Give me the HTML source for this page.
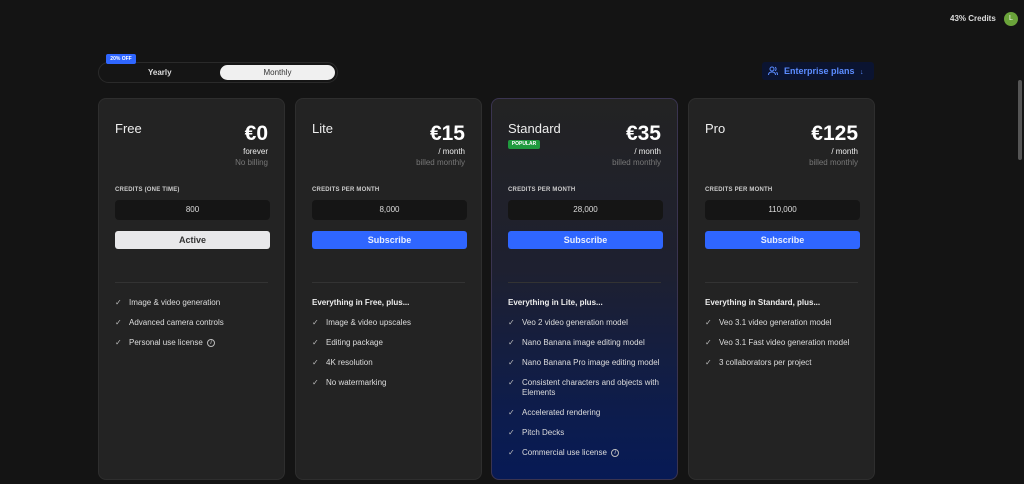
<!DOCTYPE html>
<html><head><meta charset="utf-8"><style>
*{margin:0;padding:0;box-sizing:border-box}
body{width:1024px;height:484px;background:#141414;font-family:"Liberation Sans",sans-serif;color:#fff;position:relative;overflow:hidden}
.a{position:absolute}
.card{position:absolute;top:98px;width:187px;height:382px;background:#232323;border:1px solid #2e2e2e;border-radius:8px}
.std{background:linear-gradient(180deg,#232323 0%,#1e2030 45%,#0c1c4e 85%,#071a55 100%);border-color:#3a3450}
.t{position:absolute;left:16px;top:22px;font-size:13px;color:#eee}
.p{position:absolute;right:16px;top:23px;font-size:21px;font-weight:bold}
.m{position:absolute;right:16px;top:48px;font-size:8px;color:#eee}
.b{position:absolute;right:16px;top:59px;font-size:8px;color:#777}
.cl{position:absolute;left:16px;top:88px;font-size:6px;font-weight:bold;color:#ccc;letter-spacing:.2px}
.box{position:absolute;left:16px;top:101px;width:155px;height:20px;background:#151515;border-radius:4px;font-size:8px;text-align:center;line-height:20px;color:#ddd}
.btn{position:absolute;left:16px;top:132px;width:155px;height:18px;background:#2f66ff;border-radius:3px;font-size:9px;font-weight:bold;text-align:center;line-height:18px;color:#e8eeff}
.hr{position:absolute;left:16px;right:16px;top:183px;border-top:1px solid #333}
.f{position:absolute;left:16px;top:199px;right:10px;font-size:8px;color:#ddd;line-height:10px}
.f div{position:relative;padding-left:14px;margin-bottom:10px}
.f div:before{content:"✓";position:absolute;left:0;top:0;color:#bbb;font-size:8px}
.f .h{padding-left:0;font-weight:bold;color:#eee}
.f .h:before{content:""}
.i{display:inline-block;width:8px;height:8px;border:1px solid #bbb;border-radius:50%;font-size:6px;line-height:6px;text-align:center;font-style:italic;vertical-align:middle;margin-left:2px}
</style></head><body>
<div class="a" style="left:950px;top:14px;font-size:8px;font-weight:bold;color:#ddd">43% Credits</div>
<div class="a" style="left:1004px;top:12px;width:14px;height:14px;border-radius:50%;background:#6aa33a;font-size:7px;text-align:center;line-height:14px">L</div>
<div class="a" style="left:1018px;top:80px;width:4px;height:80px;background:#555;border-radius:2px"></div>

<div class="a" style="left:98px;top:62px;width:240px;height:21px;border:1px solid #2a2a2a;border-radius:11px;background:#151515"></div>
<div class="a" style="left:148px;top:68px;font-size:8px;font-weight:bold;color:#ddd">Yearly</div>
<div class="a" style="left:220px;top:65px;width:115px;height:15px;background:#f0f0f0;border-radius:8px;font-size:8px;color:#333;text-align:center;line-height:15px">Monthly</div>
<div class="a" style="left:106px;top:54px;width:30px;height:10px;background:#2f66ff;border-radius:2px;font-size:5px;font-weight:bold;text-align:center;line-height:10px">20% OFF</div>

<div class="a" style="left:762px;top:62px;width:112px;height:18px;background:#0b1431;border-radius:3px;font-size:9px;font-weight:bold;color:#5b8cff;line-height:18px;padding-left:22px">Enterprise plans <span style="font-size:7px;margin-left:3px">↓</span></div>
<svg class="a" style="left:768px;top:66px" width="10" height="10" viewBox="0 0 10 10" fill="none" stroke="#5b8cff" stroke-width="1"><circle cx="4" cy="3" r="2"/><path d="M0.5 9c0-2 1.5-3 3.5-3s3.5 1 3.5 3"/><path d="M7 1.2a2 2 0 010 3.6M8.5 6.2c.8.5 1 1.5 1 2.8"/></svg>

<div class="card" style="left:98px">
<div class="t">Free</div><div class="p">€0</div><div class="m">forever</div><div class="b">No billing</div>
<div class="cl">CREDITS (ONE TIME)</div><div class="box">800</div>
<div class="btn" style="background:#e8e8ea;color:#333">Active</div><div class="hr"></div>
<div class="f"><div>Image &amp; video generation</div><div>Advanced camera controls</div><div>Personal use license <span class="i">i</span></div></div>
</div>
<div class="card" style="left:295px">
<div class="t">Lite</div><div class="p">€15</div><div class="m">/ month</div><div class="b">billed monthly</div>
<div class="cl">CREDITS PER MONTH</div><div class="box">8,000</div>
<div class="btn">Subscribe</div><div class="hr"></div>
<div class="f"><div class="h">Everything in Free, plus...</div><div>Image &amp; video upscales</div><div>Editing package</div><div>4K resolution</div><div>No watermarking</div></div>
</div>
<div class="card std" style="left:491px">
<div class="t">Standard</div><div class="p">€35</div><div class="m">/ month</div><div class="b">billed monthly</div>
<div class="a" style="left:16px;top:41px;width:32px;height:9px;background:#1f9a3e;border-radius:2px;font-size:5px;font-weight:bold;text-align:center;line-height:9px">POPULAR</div>
<div class="cl">CREDITS PER MONTH</div><div class="box">28,000</div>
<div class="btn">Subscribe</div><div class="hr"></div>
<div class="f"><div class="h">Everything in Lite, plus...</div><div>Veo 2 video generation model</div><div>Nano Banana image editing model</div><div>Nano Banana Pro image editing model</div><div>Consistent characters and objects with Elements</div><div>Accelerated rendering</div><div>Pitch Decks</div><div>Commercial use license <span class="i">i</span></div></div>
</div>
<div class="card" style="left:688px">
<div class="t">Pro</div><div class="p">€125</div><div class="m">/ month</div><div class="b">billed monthly</div>
<div class="cl">CREDITS PER MONTH</div><div class="box">110,000</div>
<div class="btn">Subscribe</div><div class="hr"></div>
<div class="f"><div class="h">Everything in Standard, plus...</div><div>Veo 3.1 video generation model</div><div>Veo 3.1 Fast video generation model</div><div>3 collaborators per project</div></div>
</div>
</body></html>
